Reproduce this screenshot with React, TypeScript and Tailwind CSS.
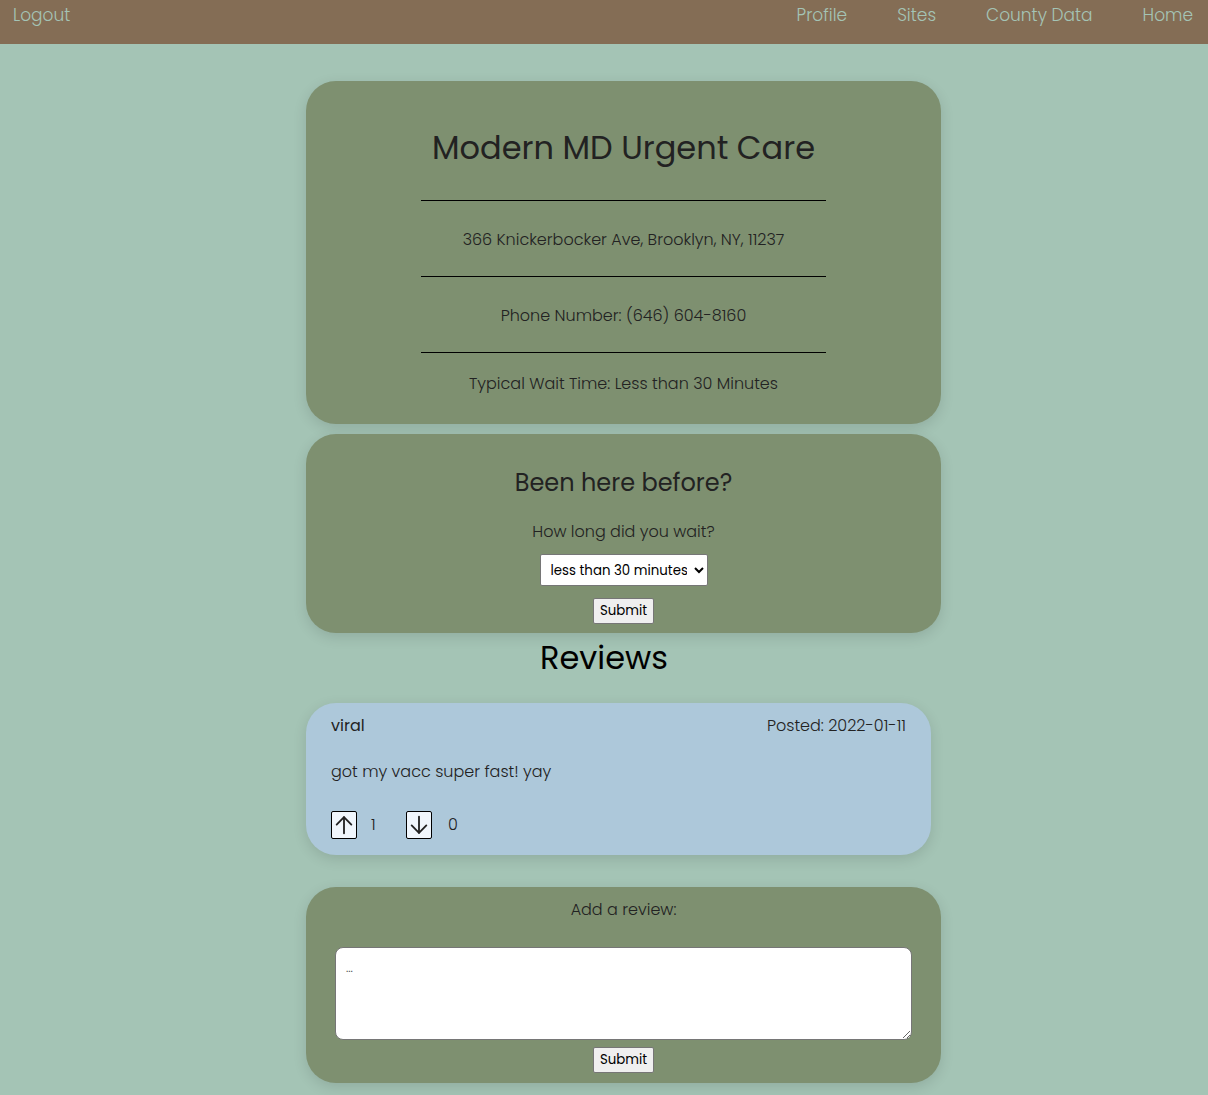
import React from "react";

const font = { fontFamily: "'Poppins', 'Open Sans', 'Noto Sans', sans-serif" };

function ArrowBtn({ dir }: { dir: "up" | "down" }) {
  return (
    <button className="w-[26px] h-[28px] border border-black rounded-[2px] bg-[#f0f6fc] flex items-center justify-center">
      <svg width="22" height="22" viewBox="0 0 24 24" fill="none" stroke="#222" strokeWidth="2" strokeLinecap="round" strokeLinejoin="round">
        {dir === "up" ? (
          <>
            <path d="M12 21V3.5" />
            <path d="M4 11.5l8-8 8 8" />
          </>
        ) : (
          <>
            <path d="M12 3v17.5" />
            <path d="M4 12.5l8 8 8-8" />
          </>
        )}
      </svg>
    </button>
  );
}

export default function App() {
  return (
    <div className="min-h-[1095px] bg-[#a4c4b5] text-[#222]" style={font}>
      <nav className="h-[44px] bg-[#846d55] flex items-start justify-between px-[13px] pt-[3px] text-[17px] font-light text-[#a4c4b5]">
        <a>Logout</a>
        <div className="flex gap-[50px] mr-[2px]">
          <a>Profile</a>
          <a>Sites</a>
          <a>County Data</a>
          <a>Home</a>
        </div>
      </nav>

      <div className="ml-[306px] w-[635px] mt-[37px] bg-[#7e9070] rounded-[30px] shadow-[0_4px_14px_rgba(0,0,0,0.12)] flex flex-col items-center pt-[47px] pb-[28px]">
        <h1 className="text-[32px] leading-[40px]">Modern MD Urgent Care</h1>
        <div className="w-[405px] border-t border-black mt-[32px]" />
        <p className="text-[16px] font-light leading-[24px] mt-[27px]">366 Knickerbocker Ave, Brooklyn, NY, 11237</p>
        <div className="w-[405px] border-t border-black mt-[24px]" />
        <p className="text-[16px] font-light leading-[24px] mt-[27px]">Phone Number: (646) 604-8160</p>
        <div className="w-[405px] border-t border-black mt-[24px]" />
        <p className="text-[16px] font-light leading-[24px] mt-[19px]">Typical Wait Time: Less than 30 Minutes</p>
      </div>

      <div className="ml-[306px] w-[635px] mt-[10px] bg-[#7e9070] rounded-[30px] shadow-[0_4px_14px_rgba(0,0,0,0.12)] flex flex-col items-center pt-[33px] pb-[9px]">
        <h2 className="text-[24px] leading-[32px]">Been here before?</h2>
        <p className="text-[16px] font-light leading-[24px] mt-[21px]">How long did you wait?</p>
        <select className="mt-[10px] h-[32px] w-[168px] bg-white border border-[#767676] rounded-[2px] text-[13.33px] text-black pl-[6px] pr-[4px]">
          <option>less than 30 minutes</option>
        </select>
        <button className="mt-[12px] h-[26px] px-[6px] bg-[#efefef] border border-[#767676] rounded-[2px] text-[13.33px] text-black">Submit</button>
      </div>

      <h2 className="text-center text-[32px] leading-[44px] text-black mt-[3px]">Reviews</h2>

      <div className="ml-[306px] w-[625px] mt-[23px] bg-[#adc8da] rounded-[30px] shadow-[0_4px_14px_rgba(0,0,0,0.12)] px-[25px] pt-[11px] pb-[16px]">
        <div className="flex justify-between text-[16px] leading-[24px]">
          <span className="font-normal">viral</span>
          <span className="font-light">Posted: 2022-01-11</span>
        </div>
        <p className="text-[16px] font-light leading-[24px] mt-[22px]">got my vacc super fast! yay</p>
        <div className="flex items-center mt-[27px] font-light text-[16px]">
          <ArrowBtn dir="up" />
          <span className="ml-[14px] w-[35px]">1</span>
          <ArrowBtn dir="down" />
          <span className="ml-[16px]">0</span>
        </div>
      </div>

      <div className="ml-[306px] w-[635px] mt-[32px] bg-[#7e9070] rounded-[30px] shadow-[0_4px_14px_rgba(0,0,0,0.12)] flex flex-col items-center pt-[11px] pb-[10px]">
        <p className="text-[16px] font-light leading-[24px]">Add a review:</p>
        <textarea placeholder="..." className="mt-[25px] w-[577px] h-[93px] bg-white border border-[#767676] rounded-[8px] text-[11px] px-[10px] py-[12px] resize-y placeholder:text-[#555] outline-none" />
        <button className="mt-[7px] h-[26px] px-[6px] bg-[#efefef] border border-[#767676] rounded-[2px] text-[13.33px] text-black">Submit</button>
      </div>
    </div>
  );
}
